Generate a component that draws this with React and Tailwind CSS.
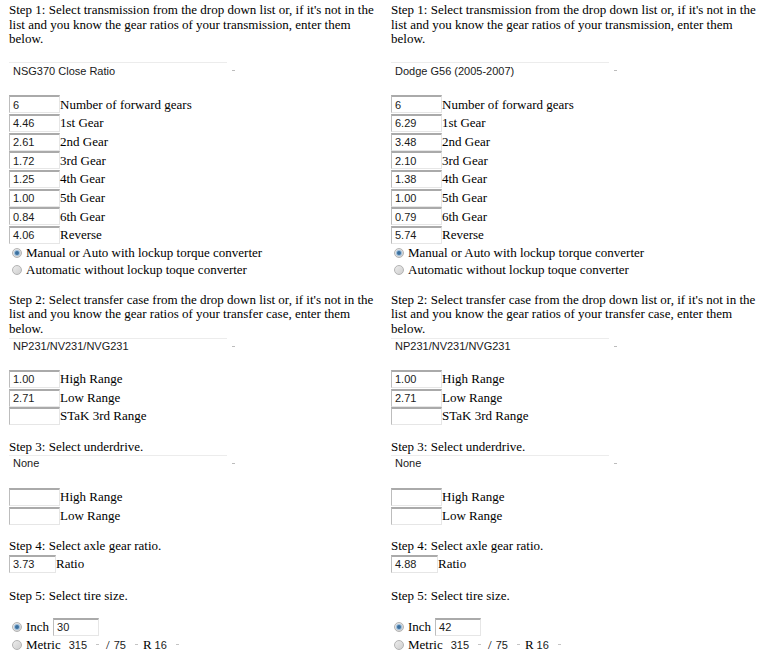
import React from "react";

const serif = { fontFamily: '"Liberation Serif", "Times New Roman", serif' };

function Para({ children, className = "" }) {
  return (
    <div className={`w-[372px] text-[13px] leading-[14.5px] text-black ${className}`} style={serif}>
      {children}
    </div>
  );
}

function Box({ value, w = "w-[51px]" }) {
  return (
    <div
      className={`${w} h-[18px] shrink-0 bg-white border-t-2 border-l border-r border-b border-t-[#aaaaaa] border-l-[#bdbdbd] border-r-[#e6e6e6] border-b-[#e6e6e6] pl-[3px] flex items-center text-[11px] text-[#1a1a1a] font-['Liberation_Sans',Arial,sans-serif]`}
    >
      {value}
    </div>
  );
}

function Field({ value, label }) {
  return (
    <div className="h-[18.7px] flex items-center">
      <Box value={value} />
      <span className="text-[13px] text-black" style={serif}>
        {label}
      </span>
    </div>
  );
}

function Dropdown({ value, className = "" }) {
  return (
    <div className={`h-[17px] flex items-center ${className}`}>
      <div className="w-[218px] h-full border-t border-t-[#ececec] pl-[4px] flex items-center text-[11px] text-[#1a1a1a] font-['Liberation_Sans',Arial,sans-serif]">
        {value}
      </div>
      <div className="ml-[5px] w-[3px] h-[1px] bg-[#bcbcbc]" />
    </div>
  );
}

function Radio({ checked }) {
  return (
    <span className="w-[10px] h-[10px] rounded-full shrink-0 border border-[#b3b3b3] bg-gradient-to-br from-[#ececec] to-[#cfcfcf] flex items-center justify-center">
      {checked && <span className="w-[4px] h-[4px] rounded-full bg-[#3a6f9e] ring-1 ring-[#9dbfdc]" />}
    </span>
  );
}

function Mini({ value }) {
  return (
    <span className="flex items-center">
      <span className="text-[11px] text-[#1a1a1a] font-['Liberation_Sans',Arial,sans-serif]">{value}</span>
      <span className="ml-[9px] w-[3px] h-[1px] bg-[#c4c4c4]" />
    </span>
  );
}

function Calculator({ d }) {
  return (
    <div className="w-[382px] pl-[9px] flex flex-col">
      <Para className="mt-[3px]">
        Step 1: Select transmission from the drop down list or, if it's not in the list and you know the gear
        ratios of your transmission, enter them below.
      </Para>
      <Dropdown value={d.trans} className="mt-[15.5px]" />
      <div className="mt-[16px] flex flex-col">
        <Field value={d.gears[0]} label="Number of forward gears" />
        <Field value={d.gears[1]} label="1st Gear" />
        <Field value={d.gears[2]} label="2nd Gear" />
        <Field value={d.gears[3]} label="3rd Gear" />
        <Field value={d.gears[4]} label="4th Gear" />
        <Field value={d.gears[5]} label="5th Gear" />
        <Field value={d.gears[6]} label="6th Gear" />
        <Field value={d.gears[7]} label="Reverse" />
      </div>
      <div className="flex flex-col text-[13px] text-black" style={serif}>
        <label className="h-[17px] flex items-center gap-[4px] pl-[3px]">
          <Radio checked />
          Manual or Auto with lockup torque converter
        </label>
        <label className="h-[17px] flex items-center gap-[4px] pl-[3px]">
          <Radio />
          Automatic without lockup toque converter
        </label>
      </div>

      <Para className="mt-[14px]">
        Step 2: Select transfer case from the drop down list or, if it's not in the list and you know the gear
        ratios of your transfer case, enter them below.
      </Para>
      <Dropdown value="NP231/NV231/NVG231" className="mt-[1.5px]" />
      <div className="mt-[15px] flex flex-col">
        <Field value="1.00" label="High Range" />
        <Field value="2.71" label="Low Range" />
        <Field value="" label="STaK 3rd Range" />
      </div>

      <Para className="mt-[14px]">Step 3: Select underdrive.</Para>
      <Dropdown value="None" className="mt-[0.5px]" />
      <div className="mt-[16px] flex flex-col">
        <Field value="" label="High Range" />
        <Field value="" label="Low Range" />
      </div>

      <Para className="mt-[14.5px]">Step 4: Select axle gear ratio.</Para>
      <div className="mt-[1px] h-[18px] flex items-center">
        <Box value={d.axle} w="w-[47px]" />
        <span className="text-[13px] text-black" style={serif}>
          Ratio
        </span>
      </div>

      <Para className="mt-[16px]">Step 5: Select tire size.</Para>
      <div className="mt-[14.5px] flex flex-col text-[13px] text-black" style={serif}>
        <div className="h-[18px] flex items-center">
          <span className="pl-[3px]">
            <Radio checked />
          </span>
          <span className="ml-[4px]">Inch</span>
          <span className="ml-[4px]">
            <Box value={d.inch} w="w-[46px]" />
          </span>
        </div>
        <div className="h-[18px] flex items-center">
          <span className="pl-[3px]">
            <Radio />
          </span>
          <span className="ml-[4px]">Metric</span>
          <span className="ml-[8px] flex items-center">
            <Mini value="315" />
            <span className="ml-[7px]">/</span>
            <span className="ml-[4px]">
              <Mini value="75" />
            </span>
            <span className="ml-[5px]">R</span>
            <span className="ml-[3px]">
              <Mini value="16" />
            </span>
          </span>
        </div>
      </div>
    </div>
  );
}

export default function App() {
  const left = {
    trans: "NSG370 Close Ratio",
    gears: ["6", "4.46", "2.61", "1.72", "1.25", "1.00", "0.84", "4.06"],
    axle: "3.73",
    inch: "30",
  };
  const right = {
    trans: "Dodge G56 (2005-2007)",
    gears: ["6", "6.29", "3.48", "2.10", "1.38", "1.00", "0.79", "5.74"],
    axle: "4.88",
    inch: "42",
  };
  return (
    <div className="w-[764px] h-[657px] bg-white flex overflow-hidden">
      <Calculator d={left} />
      <Calculator d={right} />
    </div>
  );
}
